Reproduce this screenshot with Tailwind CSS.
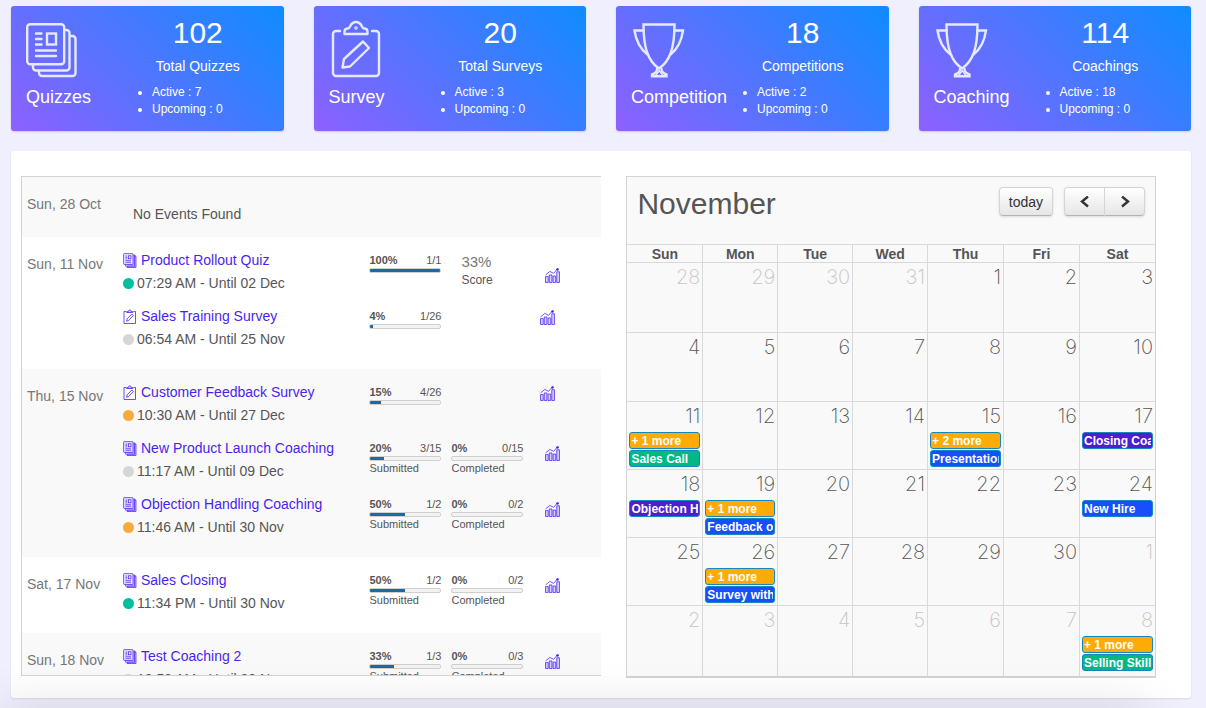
<!DOCTYPE html>
<html lang="en">
<head>
<meta charset="utf-8">
<meta name="viewport" content="width=device-width, initial-scale=1">
<title>Dashboard</title>
<script src="https://cdn.jsdelivr.net/npm/@tailwindcss/browser@4"></script>
</head>
<body class="bg-[#f0effd] font-['Liberation_Sans',Arial,sans-serif] text-sm text-[#555] min-h-screen overflow-hidden">

<svg class="hidden" aria-hidden="true">
  <symbol id="i-papers" viewBox="0 0 52 55" fill="none" stroke="currentColor" stroke-width="2.4" stroke-linejoin="round" stroke-linecap="round">
    <rect x="1.2" y="1.2" width="37" height="40" rx="3"/>
    <path d="M39 7h1.500a3 3 0 0 1 3 3v34.500a3 3 0 0 1-3 3H10a3 3 0 0 1-3-3V42"/>
    <path d="M45 13h1.500a3 3 0 0 1 3 3V50a3 3 0 0 1-3 3H16a3 3 0 0 1-3-3v-2"/>
    <path d="M10 10.500h5.500M10 16h5.500M10 21.500h5.500M10 27.500h20M10 33h20"/>
    <rect x="21" y="10.500" width="9" height="11" stroke-linejoin="miter"/>
  </symbol>
  <symbol id="i-clip" viewBox="0 0 50 58" fill="none" stroke="currentColor" stroke-width="2.4" stroke-linejoin="round" stroke-linecap="round">
    <path d="M9 11H5a3 3 0 0 0-3 3v39a3 3 0 0 0 3 3h40a3 3 0 0 0 3-3V14a3 3 0 0 0-3-3h-4"/>
    <path d="M13.500 14v-2.500c0-2 1.500-3 4-3.200C19.500 8 19 2 25 2s5.500 6 7.500 6.300c2.500.2 4 1.200 4 3.200V14z"/>
    <circle cx="25" cy="8" r=".6"/>
    <path d="M11.500 47.500l1.500-8.500L32 21.500l6 6.500L19 46.500z"/>
  </symbol>
  <symbol id="i-cup" viewBox="0 0 52 55" fill="none" stroke="currentColor" stroke-width="2.4" stroke-linejoin="miter" stroke-linecap="round">
    <path d="M10.500 1.500h31C41.500 25 37 38 26 45.500 15 38 10.500 25 10.500 1.500z"/>
    <path d="M10.500 7.500h-9C3 18 7.500 26 14.500 31.500M41.500 7.500h8.500C48.500 18 44.500 26 37.500 31.500"/>
    <path d="M24 46c0 3-2 4.500-5 5.500v1.700h14.500v-1.700c-3-1-5-2.500-5-5.500" />
    <path d="M23 52l3.200-4.500 3.300 4.500" stroke-width="1.600"/>
  </symbol>
  <symbol id="i-doc" viewBox="0 0 14 15" fill="none" stroke="currentColor" stroke-width=".7">
    <path d="M10 2h3v12.500H4V12H2v-1h8z" fill="currentColor" fill-opacity=".35" stroke="none"/>
    <rect x=".6" y=".6" width="9.400" height="10.800" rx=".6" fill="currentColor" fill-opacity=".12"/>
    <path d="M10.500 1.800h1v11.400H2.500v-1.500M12 3.200h1v11.300H4v-1"/>
    <path d="M2.500 3h1.700M2.500 4.500h1.700M2.500 6h1.700M2.500 7.700h5.500M2.500 9.300h5.500"/>
    <rect x="5.600" y="2.800" width="2.400" height="3"/>
  </symbol>
  <symbol id="i-note" viewBox="0 0 14 15" fill="none" stroke="currentColor" stroke-width=".8">
    <path d="M3 2.500H1v12h11.500v-12h-2"/>
    <path d="M3.700 3.500V2.600h1.500C5.500.3 8 .3 8.300 2.600h1.500v.9z" fill="currentColor" fill-opacity=".25"/>
    <path d="M3.600 12.200l.5-2.200L8.800 5l1.500 1.500-4.700 5.100z"/>
  </symbol>
  <symbol id="i-chart" viewBox="0 0 14 14" fill="none" stroke="currentColor" stroke-width=".7">
    <path d="M.5 8h2.500v5.500H.5zM4 6.500h2.500v7H4zM7.500 7.500H10v6H7.500zM11 3.500h2.500v10H11z" fill="currentColor" fill-opacity=".2"/>
    <path d="M.5 6.500L4.500 3.200 8 5l3.500-4"/>
    <circle cx="11.700" cy="1.300" r=".9" fill="currentColor"/>
  </symbol>
</svg>

<main class="pt-[6px] pl-[11px] pr-[15px]">
  <section id="cards" class="grid grid-cols-4 gap-[30px]"></section>

  <section class="mt-5 flex items-start gap-[25px] rounded-[3px] bg-white pt-[25px] pb-5 pl-[10px] pr-[35px] shadow-[0_1px_2px_rgba(0,0,0,0.1)]">
    <div id="agenda" class="h-[500px] flex-[581_1_0%] overflow-hidden border-y border-l border-[#d3d3d3]"></div>

    <div class="min-w-0 flex-[529_1_0%] border border-b-2 border-[#d3d3d3] bg-[#f9f9f9]">
      <div class="flex h-[67px] items-start px-[10px] pt-[10px]">
        <h2 class="flex-1 text-[30px] leading-[34px]">November</h2>
        <button type="button" class="h-[29px] rounded-[4px] border border-[#d4d4d4] border-b-[#b3b3b3] bg-linear-to-b from-white to-[#e6e6e6] px-[9px] text-sm text-[#333] shadow-sm">today</button>
        <div class="ml-[11px] flex rounded-[4px] shadow-sm">
          <button type="button" aria-label="Previous month" class="flex h-[29px] w-[41px] items-center justify-center rounded-l-[4px] border border-[#d4d4d4] border-b-[#b3b3b3] bg-linear-to-b from-white to-[#e6e6e6] text-[#333]">
            <svg class="h-[12px] w-[10px]" viewBox="0 0 10 12" fill="none" stroke="currentColor" stroke-width="2.400"><path d="M8 0.500L2 5.500l6 5"/></svg>
          </button>
          <button type="button" aria-label="Next month" class="flex h-[29px] w-[40px] items-center justify-center rounded-r-[4px] border border-l-0 border-[#d4d4d4] border-b-[#b3b3b3] bg-linear-to-b from-white to-[#e6e6e6] text-[#333]">
            <svg class="h-[12px] w-[10px]" viewBox="0 0 10 12" fill="none" stroke="currentColor" stroke-width="2.400"><path d="M2 0.500l6 5-6 5"/></svg>
          </button>
        </div>
      </div>
      <table class="w-full table-fixed border-separate border-spacing-0">
        <colgroup><col span="4" class="w-[14.2%]"><col span="3"></colgroup>
        <thead><tr id="days"></tr></thead>
        <tbody id="weeks"></tbody>
      </table>
    </div>
  </section>
</main>

<!-- soft shade along the lower window edge -->
<div class="pointer-events-none fixed top-full left-0 right-[60px] h-10 shadow-[0_0_50px_rgba(0,0,0,0.13)]"></div>

<script>
const cards = [
  ['Quizzes', 'i-papers', 'mt-[17px] h-[55px] w-[52px]', 102, 'Total Quizzes', 7],
  ['Survey', 'i-clip', 'mt-[14px] ml-[2px] h-[58px] w-[50px]', 20, 'Total Surveys', 3],
  ['Competition', 'i-cup', 'mt-[17px] ml-[2px] h-[55px] w-[52px]', 18, 'Competitions', 2],
  ['Coaching', 'i-cup', 'mt-[17px] ml-[2px] h-[55px] w-[52px]', 114, 'Coachings', 18],
];
document.getElementById('cards').innerHTML = cards.map(([name, icon, cls, n, label, active]) => `
  <article class="flex h-[125px] rounded-[3px] bg-[linear-gradient(45deg,#8e60ff,#0f8cff)] pl-[15px] text-white shadow-[0_1px_2px_rgba(0,0,0,0.15)]">
    <div class="w-[98px] shrink-0">
      <svg class="${cls} text-[#e6e9ff]"><use href="#${icon}"/></svg>
      <h3 class="mt-[8px] text-lg leading-[22px]">${name}</h3>
    </div>
    <div class="flex-1 pr-[12px]">
      <p class="pt-[10px] text-center text-[30px] leading-[34px]">${n}</p>
      <p class="mt-[7px] text-center text-sm leading-[18px]">${label}</p>
      <ul class="mt-[9px] list-disc pl-[28px] text-xs leading-[17px]"><li>Active : ${active}</li><li>Upcoming : 0</li></ul>
    </div>
  </article>`).join('');

const green = 'bg-[#00c09d]', grey = 'bg-[#d6d6d6]', orange = 'bg-[#f6ab3c]';
const agenda = [
  ['Sun, 28 Oct', []],
  ['Sun, 11 Nov', [
    ['i-doc', 'Product Rollout Quiz', green, '07:29 AM - Until 02 Dec', [[100, '1/1', '']], 'score'],
    ['i-note', 'Sales Training Survey', grey, '06:54 AM - Until 25 Nov', [[4, '1/26', '']], 'single']]],
  ['Thu, 15 Nov', [
    ['i-note', 'Customer Feedback Survey', orange, '10:30 AM - Until 27 Dec', [[15, '4/26', '']], 'single'],
    ['i-doc', 'New Product Launch Coaching', grey, '11:17 AM - Until 09 Dec', [[20, '3/15', 'Submitted'], [0, '0/15', 'Completed']], 'pair'],
    ['i-doc', 'Objection Handling Coaching', orange, '11:46 AM - Until 30 Nov', [[50, '1/2', 'Submitted'], [0, '0/2', 'Completed']], 'pair']]],
  ['Sat, 17 Nov', [
    ['i-doc', 'Sales Closing', green, '11:34 PM - Until 30 Nov', [[50, '1/2', 'Submitted'], [0, '0/2', 'Completed']], 'pair']]],
  ['Sun, 18 Nov', [
    ['i-doc', 'Test Coaching 2', grey, '10:53 AM - Until 30 Nov', [[33, '1/3', 'Submitted'], [0, '0/3', 'Completed']], 'pair']]],
];
const chartPlace = { score: 'mt-[19px] mr-[41px]', single: 'mt-[5px] mr-[46px]', pair: 'mt-[9px] mr-[41px]' };
const bar = ([pct, frac, label]) => `
  <div class="w-[72px] pt-[4px] text-[11px] leading-[14px]">
    <div class="flex justify-between"><b>${pct}%</b><span>${frac}</span></div>
    <div class="mt-[1px] h-[5px] overflow-hidden rounded-[2px] border border-[#cfcfcf] bg-[#f2f2f2]" role="progressbar" aria-valuenow="${pct}" aria-valuemin="0" aria-valuemax="100"><div class="h-full bg-[#1b69a8]" style="width:${pct}%"></div></div>
    <div>${label}</div>
  </div>`;
const score = `<div class="w-[62px] pt-[4px]"><div class="text-[15px] leading-[18px] text-[#777]">33%</div><div class="text-xs leading-[18px]">Score</div></div>`;
const event = ([icon, title, dot, time, bars, kind]) => `
  <div class="flex h-[56px]">
    <div class="min-w-0 flex-1 leading-[23px]">
      <a href="#" class="flex items-center gap-[4px] text-[#4a1ff0]"><svg class="h-[15px] w-[14px]"><use href="#${icon}"/></svg>${title}</a>
      <p class="flex items-center gap-[3px]"><span class="size-[11px] rounded-full ${dot}"></span>${time}</p>
    </div>
    <div class="flex w-[232px] shrink-0 gap-[10px]">
      ${bars.map(bar).join('')}${kind === 'score' ? '<div class="pl-[10px]">' + score + '</div>' : ''}
      <a href="#" aria-label="Statistics" class="ml-auto h-[14px] text-[#4a1ff0] ${chartPlace[kind]}"><svg class="size-[15px]"><use href="#i-chart"/></svg></a>
    </div>
  </div>`;
document.getElementById('agenda').innerHTML = agenda.map(([date, events]) => `
  <section class="flex pl-[5px] odd:bg-[#f9f9f9]">
    <h4 class="w-[96px] shrink-0 pt-[18px] leading-[18px] text-[#777]">${date}</h4>
    ${events.length ? `<div class="flex-1 pt-[12px] pb-[8px]">${events.map(event).join('')}</div>` : '<p class="px-[10px] pt-[28px] pb-[14px] leading-[18px]">No Events Found</p>'}
  </section>`).join('');

document.getElementById('days').innerHTML = ['Sun', 'Mon', 'Tue', 'Wed', 'Thu', 'Fri', 'Sat'].map(d =>
  `<th class="h-[18px] border-t border-l border-[#d9d9d9] p-0 pt-[1px] text-sm leading-[16px] font-bold first:border-l-0">${d}</th>`).join('');

const fills = { o: 'bg-[#ffab05]', g: 'bg-[#00b884]', b: 'bg-[#164ffc]', p: 'bg-[#4e1fd0]' };
const events = {
  14: [['o', '+ 1 more'], ['g', 'Sales Call']],
  18: [['o', '+ 2 more'], ['b', 'Presentation']],
  20: [['p', 'Closing Coaching']],
  21: [['p', 'Objection Handling']],
  22: [['o', '+ 1 more'], ['b', 'Feedback on']],
  27: [['b', 'New Hire']],
  29: [['o', '+ 1 more'], ['b', 'Survey with']],
  41: [['o', '+ 1 more'], ['g', 'Selling Skills']],
};
const heights = ['h-[70px]', 'h-[69px]', 'h-[68px]', 'h-[68px]', 'h-[68px]', 'h-[71px]'];
document.getElementById('weeks').innerHTML = heights.map((h, w) => '<tr>' + [0, 1, 2, 3, 4, 5, 6].map(d => {
  const i = w * 7 + d;
  const out = i < 4 || i > 33;
  const n = i < 4 ? 28 + i : i > 33 ? i - 33 : i - 3;
  return `<td class="${h} overflow-hidden border-t border-l border-[#d9d9d9] p-0 align-top first:border-l-0">
    <div class="h-[30px] pr-[2px] text-right font-['Inter'] text-[20px] leading-[29px] font-extralight ${out ? 'text-[#c4c4c4]' : 'text-[#555]'}">${n}</div>
    ${(events[i] || []).map(([c, t]) => `<a href="#" class="mx-[2px] mb-[1px] block h-[17px] rounded-[3px] border border-[#1587bd] px-[1px] text-xs leading-[16px] font-bold whitespace-nowrap text-white ${fills[c]}"><span class="block overflow-hidden">${t}</span></a>`).join('')}
  </td>`;
}).join('') + '</tr>').join('');
</script>
</body>
</html>
